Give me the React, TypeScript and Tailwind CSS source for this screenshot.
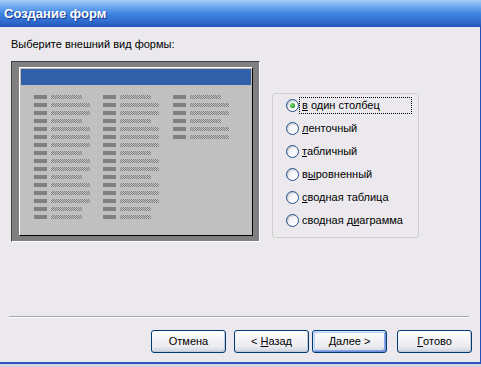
import React from "react";

const pattern12 = [0, 1, 1, 0, 1, 1, 1, 0, 1, 1, 0, 1, 1, 1, 0, 0];
const pattern3 = [0, 1, 1, 0, 1, 1];

function PreviewColumn({ rows, width }: { rows: number[]; width: string }) {
  return (
    <div className={`flex flex-col gap-[4px] ${width}`}>
      {rows.map((r, i) => (
        <div key={i} className="flex h-[4px] items-center">
          <div className="h-[4px] w-[13px] bg-[#808080]" />
          <div
            className={`ml-[4px] h-[4px] bg-[image:repeating-conic-gradient(#808080_0%_25%,#c0c0c0_0%_50%)] bg-[length:2px_2px] ${
              r ? "w-[39px]" : "w-[31px]"
            }`}
          />
        </div>
      ))}
    </div>
  );
}

function Radio({
  checked,
  focused,
  children,
}: {
  checked?: boolean;
  focused?: boolean;
  children: React.ReactNode;
}) {
  return (
    <div className="flex h-[23px] items-center pl-[13px]">
      <div className="flex h-[13px] w-[13px] shrink-0 items-center justify-center rounded-full border border-[#1f4f86] bg-[linear-gradient(135deg,#e6e6ec_0%,#f6f6f8_45%,#ffffff_100%)] shadow-[inset_-1px_-1px_1px_#ffffff,inset_1px_1px_1px_#c8c8d0]">
        {checked && (
          <div className="h-[5px] w-[5px] rounded-full bg-[radial-gradient(circle_at_35%_35%,#7ee07e,#21a121_70%)]" />
        )}
      </div>
      <div
        className={`flex h-[17px] items-center pl-[2px] ${
          focused ? "w-[113px] border border-dotted border-black" : "border border-transparent"
        }`}
      >
        <span className="text-[11px] leading-[13px] text-black">{children}</span>
      </div>
    </div>
  );
}

function Btn({ children, def }: { children: React.ReactNode; def?: boolean }) {
  return (
    <div
      className={`flex h-[23px] w-[75px] items-center justify-center whitespace-pre rounded-[3px] border border-[#003c74] bg-[linear-gradient(to_bottom,#ffffff_0%,#f5f5f7_35%,#ebebf0_75%,#d6d9e4_92%,#c2c8da_100%)] text-[11px] leading-[13px] text-black ${
        def
          ? "shadow-[inset_1px_1px_0_#cee0ff,inset_-1px_-1px_0_#6f8fd8,inset_2px_2px_0_#bcd0f8,inset_-2px_-2px_0_#8aa6e6]"
          : "shadow-[inset_-1px_-1px_0_#c4c9d8]"
      }`}
    >
      {children}
    </div>
  );
}

export default function App() {
  return (
    <div
      className="flex h-[367px] w-[481px] flex-col overflow-hidden bg-[#ebe9ed]"
      style={{ fontFamily: '"Liberation Sans", Arial, sans-serif' }}
    >
      <div className="flex h-[27px] shrink-0 items-center bg-[linear-gradient(to_bottom,#a4cdf8_0%,#7db4f2_18%,#5596e8_38%,#3d82de_52%,#3676d6_68%,#2d66c9_85%,#2452b6_100%)] pl-[4px]">
        <span className="text-[13px] font-bold leading-[16px] text-white [text-shadow:1px_1px_0_#173a8e]">
          Создание форм
        </span>
      </div>

      <div className="flex flex-1 flex-col border-r border-r-[#2451b8]">
        <div className="pl-[11px] pt-[10px] text-[11px] leading-[14px] text-black">
          Выберите внешний вид формы:
        </div>

        <div className="mt-[10px] flex items-start gap-[12px] pl-[11px]">
          <div className="flex h-[181px] w-[249px] flex-col border border-b-white border-l-[#404040] border-r-white border-t-[#404040] bg-[#808080] pb-[5px] pl-[7px] pr-[6px] pt-[5px]">
            <div className="flex flex-1 flex-col border border-b-black border-l-white border-r-black border-t-white bg-[#c0c0c0] p-[1px]">
              <div className="h-[16px] bg-[#3160a8]" />
              <div className="flex pl-[13px] pt-[10px]">
                <PreviewColumn rows={pattern12} width="w-[69px]" />
                <PreviewColumn rows={pattern12} width="w-[70px]" />
                <PreviewColumn rows={pattern3} width="w-[60px]" />
              </div>
            </div>
          </div>

          <div className="mt-[32px] h-[145px] w-[147px] rounded-[3px] border border-[#d0d0c8]">
            <Radio checked focused>
              <u>в</u> один столбец
            </Radio>
            <Radio>
              <u>л</u>енточный
            </Radio>
            <Radio>
              <u>т</u>абличный
            </Radio>
            <Radio>
              в<u>ы</u>ровненный
            </Radio>
            <Radio>
              <u>с</u>водная таблица
            </Radio>
            <Radio>
              сводная д<u>и</u>аграмма
            </Radio>
          </div>
        </div>

        <div className="ml-[9px] mt-[74px] h-[2px] w-[460px] border-b border-t border-b-white border-t-[#a7a6aa]" />

        <div className="mt-[12px] flex pl-[151px]">
          <Btn>Отмена</Btn>
          <div className="ml-[8px]">
            <Btn>
              {"< "}
              <u>Н</u>
              {"азад"}
            </Btn>
          </div>
          <div className="ml-[3px]">
            <Btn def>
              <u>Д</u>
              {"алее >"}
            </Btn>
          </div>
          <div className="ml-[10px]">
            <Btn>
              <u>Г</u>отово
            </Btn>
          </div>
        </div>

        <div className="mt-auto h-[2px] bg-[#2f58bf]" />
      </div>
      <div className="h-[3px] shrink-0 bg-[#d5d4de]" />
    </div>
  );
}
